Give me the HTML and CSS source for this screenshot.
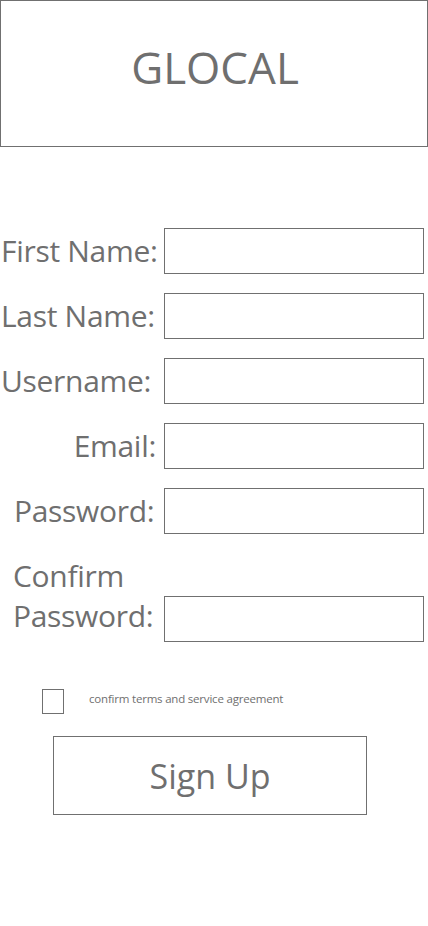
FILE: index.html
```html
<!DOCTYPE html>
<html lang="en">
<head>
<meta charset="utf-8">
<title>GLOCAL - Sign Up</title>
<link rel="stylesheet" href="styles.css">
</head>
<body>
<header class="brand">
  <h1 class="brand-title">GLOCAL</h1>
</header>
<main class="signup">
  <form class="form">
    <div class="row">
      <label class="label label-first" for="first">First Name:</label>
      <input class="field" id="first" type="text">
    </div>
    <div class="row">
      <label class="label label-last" for="last">Last Name:</label>
      <input class="field" id="last" type="text">
    </div>
    <div class="row">
      <label class="label label-user" for="user">Username:</label>
      <input class="field" id="user" type="text">
    </div>
    <div class="row">
      <label class="label label-email" for="email">Email:</label>
      <input class="field" id="email" type="email">
    </div>
    <div class="row">
      <label class="label label-pass" for="pass">Password:</label>
      <input class="field" id="pass" type="password">
    </div>
    <div class="row row-confirm">
      <label class="label label-confirm" for="confirm">Confirm<br>Password:</label>
      <input class="field" id="confirm" type="password">
    </div>
    <div class="terms">
      <span class="checkbox"></span>
      <span class="terms-text">confirm terms and service agreement</span>
    </div>
    <div class="actions">
      <button class="signup-btn" type="button">Sign Up</button>
    </div>
  </form>
</main>
</body>
</html>
```
FILE: styles.css
```css
* { box-sizing: border-box; }
html, body { margin: 0; padding: 0; background: #fff; }
body {
  width: 428px;
  height: 926px;
  font-family: "Open Sans", "Noto Sans", sans-serif;
  color: #6f6f6f;
}
.brand {
  height: 147px;
  border: 1px solid #707070;
  display: flex;
  align-items: center;
  justify-content: center;
}
.brand-title {
  margin: 0;
  font-weight: 400;
  font-size: 44px;
  letter-spacing: 0;
  line-height: 1;
  padding-left: 2px;
  padding-bottom: 14px;
}
.form {
  display: flex;
  flex-direction: column;
  padding-top: 81px;
}
.row {
  display: flex;
  align-items: center;
  height: 46px;
  margin-bottom: 19px;
}
.row-confirm {
  align-items: flex-end;
  height: auto;
  margin-top: 3px;
  margin-bottom: 0;
}
.label {
  width: 164px;
  flex: none;
  font-size: 30px;
  letter-spacing: -0.3px;
  line-height: 46px;
  white-space: nowrap;
}
.label-first { padding-left: 1px; }
.label-last { padding-left: 1px; }
.label-user { padding-left: 1px; }
.label-email { text-align: right; padding-right: 8px; }
.label-pass { padding-left: 14px; }
.label-confirm { padding-left: 13px; line-height: 40px; margin-bottom: 6px; }
.field {
  width: 260px;
  height: 46px;
  border: 1px solid #707070;
  border-radius: 0;
  background: #fff;
  padding: 0;
  margin: 0;
  outline: none;
}
.terms {
  display: flex;
  align-items: center;
  margin-top: 47px;
  padding-left: 42px;
  height: 25px;
}
.checkbox {
  width: 22px;
  height: 25px;
  border: 1px solid #707070;
  flex: none;
}
.terms-text {
  margin-left: 25px;
  font-size: 11.5px;
  letter-spacing: -0.2px;
  margin-top: -7px;
}
.actions {
  padding-left: 53px;
  margin-top: 22px;
}
.signup-btn {
  width: 314px;
  height: 79px;
  border: 1px solid #707070;
  background: #fff;
  color: #6f6f6f;
  font-family: "Open Sans", "Noto Sans", sans-serif;
  font-size: 34px;
  padding: 0;
  margin: 0;
}
```
